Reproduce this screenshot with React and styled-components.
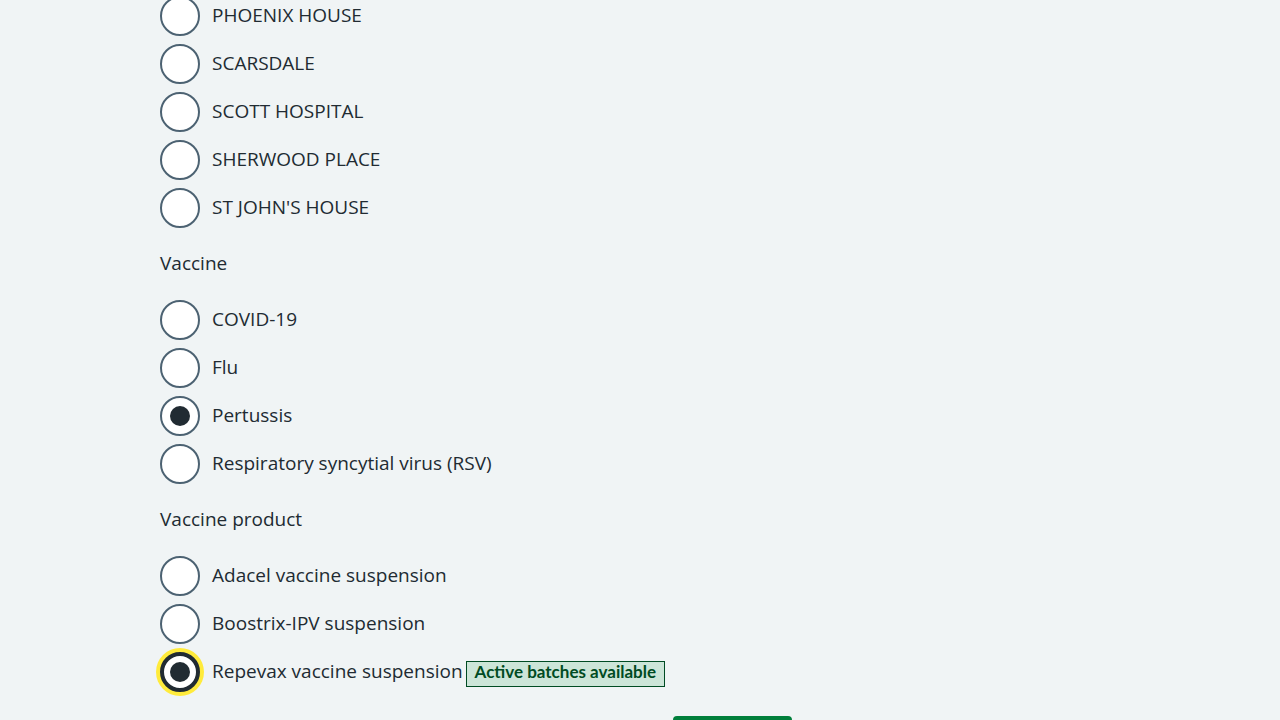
import React from 'react';
import styled, { createGlobalStyle } from 'styled-components';

const GlobalStyle = createGlobalStyle`
  * { box-sizing: border-box; }
  body {
    margin: 0;
    background: #f0f4f5;
    color: #212b32;
    font-family: "Open Sans", "Noto Sans", sans-serif;
    font-size: 19px;
    line-height: 28px;
  }
`;

const Page = styled.main`
  height: 100vh;
  overflow: auto;
  scrollbar-width: none;
`;

const Container = styled.div`
  max-width: 960px;
  margin: 0 auto;
`;

const Form = styled.form`
  display: flex;
  flex-direction: column;
  gap: 20px;
  max-width: 632px;
  margin-top: -4px;
`;

const Group = styled.fieldset`
  min-width: 0;
  margin: 0;
  padding: 0;
  border: 0;
`;

const Legend = styled.legend`
  margin-bottom: 23px;
  padding: 1px 0 0;
`;

const Options = styled.div`
  display: flex;
  flex-direction: column;
  gap: 8px;
`;

const Option = styled.div`
  display: flex;
  align-items: center;
  gap: 12px;
  height: 40px;
  white-space: nowrap;
`;

const Radio = styled.input`
  flex: none;
  display: grid;
  place-content: center;
  appearance: none;
  width: 40px;
  height: 40px;
  margin: 0;
  border: 2px solid #4c6272;
  border-radius: 50%;
  background: #fff;

  &:checked::before {
    content: "";
    width: 20px;
    height: 20px;
    border-radius: 50%;
    background: #212b32;
  }
  &:focus {
    border: 4px solid #212b32;
    outline: none;
    box-shadow: 0 0 0 4px #ffeb3b;
  }
`;

const OptionLabel = styled.label`
  padding-bottom: 2px;
`;

const Tag = styled.strong`
  margin: 4px 0 0 -9px;
  padding: 0 8px 4px;
  border: 1px solid #004b23;
  background: #cce5d8;
  color: #004b23;
  font-family: Lato, "Open Sans", sans-serif;
  font-size: 17px;
  font-weight: 700;
  line-height: 20px;
`;

const Actions = styled.div`
  display: flex;
  justify-content: flex-end;
  padding-top: 4px;
`;

const Submit = styled.button`
  min-width: 119px;
  padding: 12px 8px;
  border: 0;
  border-radius: 4px;
  background: #007f3b;
  color: #fff;
  font: inherit;
  font-weight: 700;
`;

const sites = ['PHOENIX HOUSE', 'SCARSDALE', 'SCOTT HOSPITAL', 'SHERWOOD PLACE', "ST JOHN'S HOUSE"];
const vaccines = ['COVID-19', 'Flu', 'Pertussis', 'Respiratory syncytial virus (RSV)'];
const products = ['Adacel vaccine suspension', 'Boostrix-IPV suspension', 'Repevax vaccine suspension'];

function RadioGroup({ name, legend, items, selected, focused, tags = {} }) {
  return (
    <Group>
      {legend && <Legend>{legend}</Legend>}
      <Options>
        {items.map((item, i) => (
          <Option key={item}>
            <Radio
              type="radio"
              name={name}
              id={`${name}-${i}`}
              defaultChecked={item === selected}
              autoFocus={item === focused}
            />
            <OptionLabel htmlFor={`${name}-${i}`}>{item}</OptionLabel>
            {tags[item] && <Tag>{tags[item]}</Tag>}
          </Option>
        ))}
      </Options>
    </Group>
  );
}

export default function App() {
  return (
    <Page>
      <GlobalStyle />
      <Container>
        <Form>
          <RadioGroup name="site" items={sites} />
          <RadioGroup name="vaccine" legend="Vaccine" items={vaccines} selected="Pertussis" />
          <RadioGroup
            name="product"
            legend="Vaccine product"
            items={products}
            selected="Repevax vaccine suspension"
            focused="Repevax vaccine suspension"
            tags={{ 'Repevax vaccine suspension': 'Active batches available' }}
          />
          <Actions>
            <Submit type="button">Continue</Submit>
          </Actions>
        </Form>
      </Container>
    </Page>
  );
}
